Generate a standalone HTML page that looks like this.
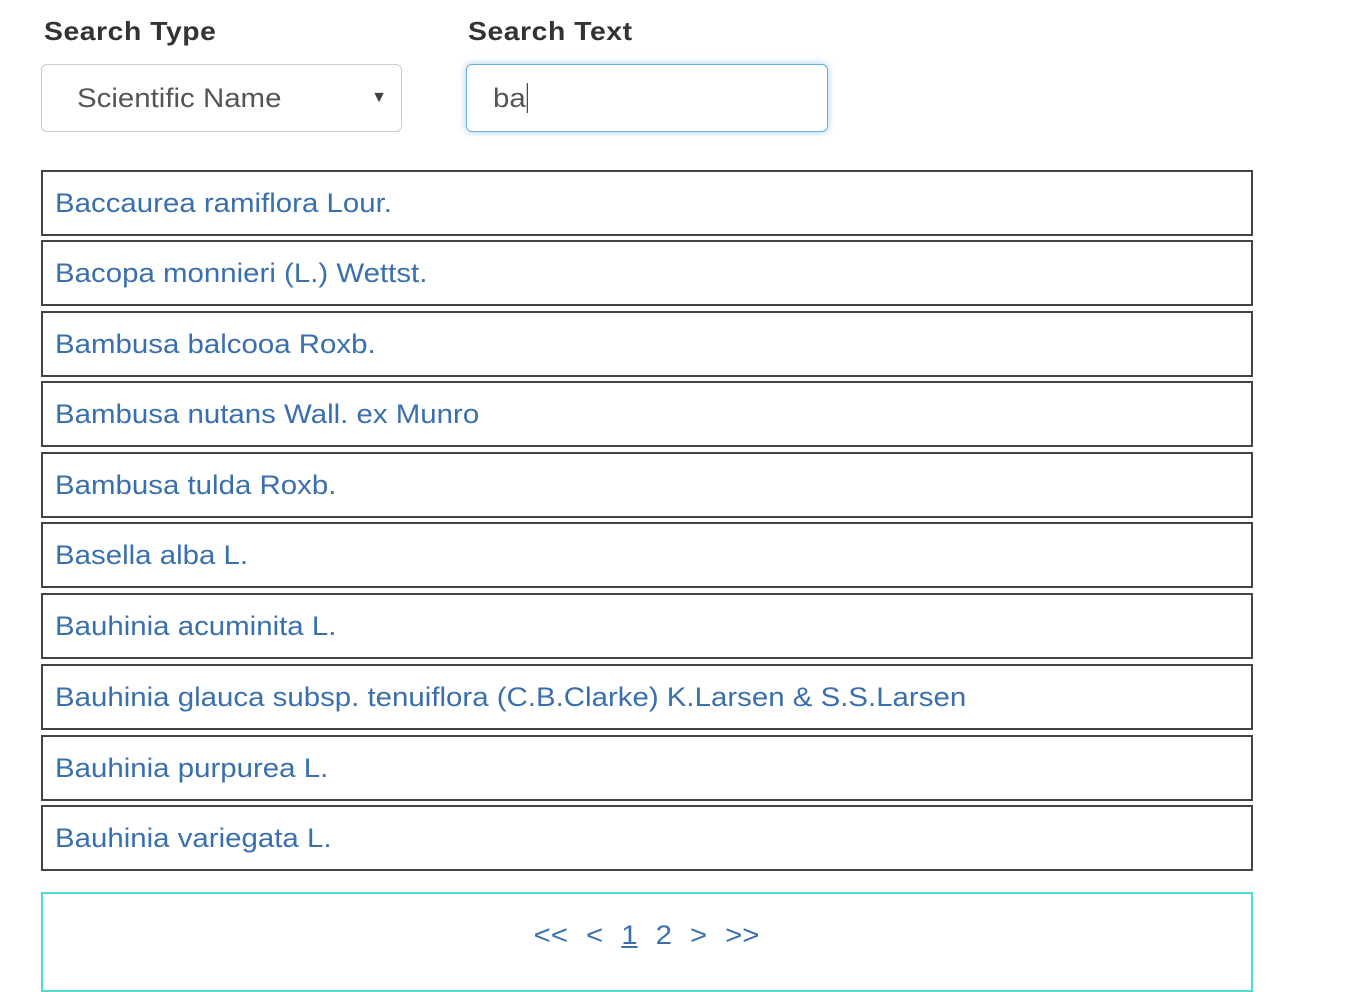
<!DOCTYPE html>
<html><head><meta charset="utf-8"><style>
html,body{margin:0;padding:0;background:#fff;width:1359px;height:971px;overflow:hidden;font-family:"Liberation Sans",Arial,sans-serif}
.s{display:inline-block;transform:scaleX(1.09);transform-origin:left center}
.lbl{position:absolute;top:16px;font-weight:bold;font-size:26px;color:#333;letter-spacing:0.5px}
.box{position:absolute;top:64px;height:68px;box-sizing:border-box;border-radius:6px;font-size:27px;color:#555;line-height:66px}
.sel{left:41px;width:361px;border:1.5px solid #ccc;padding-left:35px}
.sel .a{position:absolute;right:14px;top:0;font-size:16px;color:#444}
.inp{left:466px;width:362px;border:1.5px solid #66afe9;box-shadow:0 0 8px rgba(102,175,233,.6);padding-left:26px}
.row{position:absolute;left:41px;width:1212px;height:66px;box-sizing:border-box;border:2px solid #444;padding-left:12px;font-size:27px;line-height:62px;color:#3a6fae;white-space:nowrap}
.pg{position:absolute;left:41px;top:892px;width:1212px;height:100px;box-sizing:border-box;border:2px solid #4fdccb;text-align:center;font-size:27px;color:#3a6fae;padding-top:26px;word-spacing:9px}
.pg .s{transform-origin:center}
</style></head><body>
<div class="lbl" style="left:44px"><span class="s">Search Type</span></div>
<div class="lbl" style="left:468px"><span class="s">Search Text</span></div>
<div class="box sel"><span class="s">Scientific Name</span><span class="a">▼</span></div>
<div class="box inp"><span class="s">ba<span style="border-left:1.5px solid #333;margin-left:1px"></span></span></div>
<div class="row" style="top:170px"><span class="s">Baccaurea ramiflora Lour.</span></div>
<div class="row" style="top:240px"><span class="s">Bacopa monnieri (L.) Wettst.</span></div>
<div class="row" style="top:311px"><span class="s">Bambusa balcooa Roxb.</span></div>
<div class="row" style="top:381px"><span class="s">Bambusa nutans Wall. ex Munro</span></div>
<div class="row" style="top:452px"><span class="s">Bambusa tulda Roxb.</span></div>
<div class="row" style="top:522px"><span class="s">Basella alba L.</span></div>
<div class="row" style="top:593px"><span class="s">Bauhinia acuminita L.</span></div>
<div class="row" style="top:664px"><span class="s">Bauhinia glauca subsp. tenuiflora (C.B.Clarke) K.Larsen &amp; S.S.Larsen</span></div>
<div class="row" style="top:735px"><span class="s">Bauhinia purpurea L.</span></div>
<div class="row" style="top:805px"><span class="s">Bauhinia variegata L.</span></div>
<div class="pg"><span class="s">&lt;&lt; &lt; <u>1</u> 2 &gt; &gt;&gt;</span></div>
</body></html>
